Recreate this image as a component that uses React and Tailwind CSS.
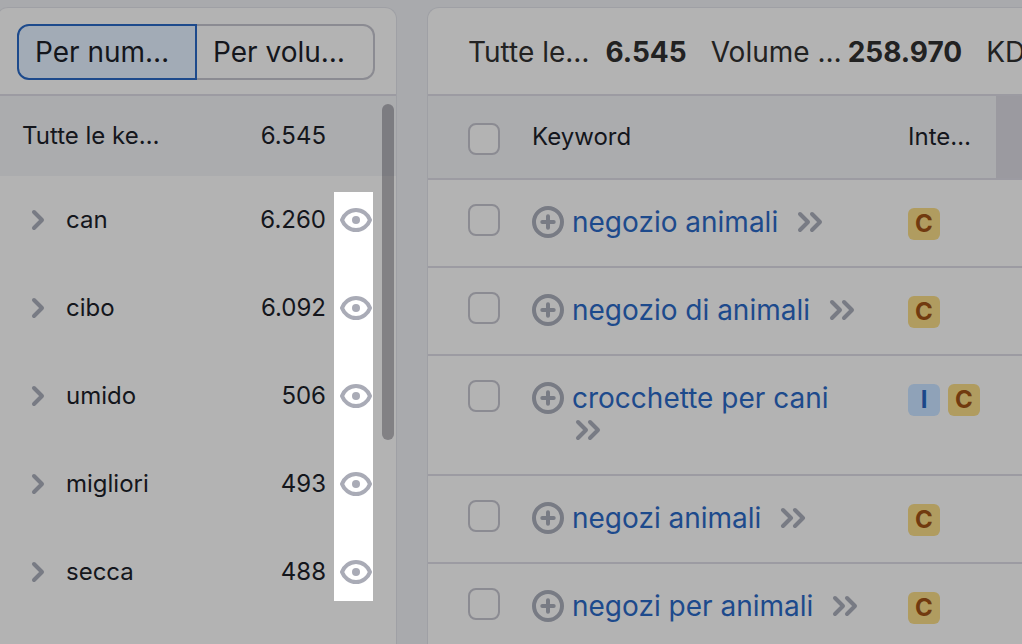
const groups = [
  { name: "can", count: "6.260" },
  { name: "cibo", count: "6.092" },
  { name: "umido", count: "506" },
  { name: "migliori", count: "493" },
  { name: "secca", count: "488" },
];

const keywords = [
  { text: "negozio animali", intents: ["C"] },
  { text: "negozio di animali", intents: ["C"] },
  { text: "crocchette per cani", intents: ["I", "C"] },
  { text: "negozi animali", intents: ["C"] },
  { text: "negozi per animali", intents: ["C"] },
];

const intentStyles = {
  C: "bg-[#b09c60] text-[#713a0f]",
  I: "bg-[#8fa2b8] text-[#1b4789]",
};

function ChevronIcon() {
  return (
    <svg className="size-8 shrink-0" viewBox="0 0 32 32" fill="none" stroke="#787b84" strokeWidth="4" strokeLinecap="round" strokeLinejoin="round">
      <path d="M12 8l8 8-8 8" />
    </svg>
  );
}

function DoubleChevronIcon() {
  return (
    <svg className="size-8" viewBox="0 0 32 32" fill="none" stroke="#787b84" strokeWidth="4" strokeLinecap="round" strokeLinejoin="round">
      <path d="M6 8l8 8-8 8M18 8l8 8-8 8" />
    </svg>
  );
}

function PlusIcon() {
  return (
    <svg className="size-8" viewBox="0 0 32 32" fill="none" stroke="#787b84" strokeWidth="4" strokeLinecap="round">
      <circle cx="16" cy="16" r="14" />
      <path d="M16 10.3v11.4M10.3 16h11.4" />
    </svg>
  );
}

function EyeIcon() {
  return (
    <svg className="size-8" viewBox="0 0 32 32" fill="none">
      <path
        d="M2 16C4 10.500 9.500 6 16 6s12 4.500 14 10c-2 5.500-7.500 10-14 10S4 21.500 2 16z"
        stroke="#a9abb6"
        strokeWidth="4"
        strokeLinejoin="round"
      />
      <circle cx="16" cy="16" r="4" fill="#a9abb6" />
    </svg>
  );
}

function Checkbox({ label }) {
  return (
    <input
      type="checkbox"
      aria-label={label}
      className="block size-8 appearance-none rounded-lg border-2 border-[#8b8b92] bg-[#b3b3b3]"
    />
  );
}

function GroupsPanel() {
  return (
    <aside className="-ml-1 w-[401px] shrink-0 rounded-t-xl border border-b-0 border-[#9fa0a5] bg-[#b3b3b3]">
      <div className="flex border-b-2 border-[#9c9ba2] pt-4 pr-[21px] pb-3.5 pl-5 text-[28px] leading-8">
        <button className="h-14 flex-1 rounded-l-xl border-2 border-[#1d4a8c] bg-[#a2abb6] pl-4 text-left">Per num…</button>
        <button className="h-14 flex-1 rounded-r-xl border-2 border-l-0 border-[#8b8b92] pl-4 text-left">Per volu…</button>
      </div>
      <div className="relative text-2xl">
        <div className="flex h-20 items-center justify-between bg-[#abacae] pl-[25px] pr-[70px]">
          <span>Tutte le ke…</span>
          <span>6.545</span>
        </div>
        <div className="flex items-start">
          <ul className="flex-1">
            {groups.map((g) => (
              <li key={g.name} className="flex h-22 items-center pl-[25px] pr-2">
                <button aria-label={`Espandi ${g.name}`}>
                  <ChevronIcon />
                </button>
                <span className="ml-3 flex-1">{g.name}</span>
                <span>{g.count}</span>
              </li>
            ))}
          </ul>
          <div className="mt-4 mr-[23px] flex flex-col gap-14 bg-white pt-3 pr-px pb-[13px] pl-1.5">
            {groups.map((g) => (
              <button key={g.name} aria-label={`Nascondi ${g.name}`}>
                <EyeIcon />
              </button>
            ))}
          </div>
        </div>
        <div className="absolute top-2 right-0.5 h-84 w-3 rounded-full bg-[#05000a]/28" />
      </div>
    </aside>
  );
}

function KeywordRow({ keyword }) {
  return (
    <tr className="border-b-2 border-[#9c9ba2] align-top">
      <td className="pt-6 pl-10">
        <Checkbox label={keyword.text} />
      </td>
      <td className="pt-[26px] pr-9 pb-7">
        <div className="flex items-start gap-2">
          <button aria-label={`Aggiungi ${keyword.text}`}>
            <PlusIcon />
          </button>
          <div className="flex flex-1 flex-wrap gap-x-4">
            <a href="#" className="text-[28px] leading-8 text-[#1d4a8c]">{keyword.text}</a>
            <a href="#" aria-label={`Apri ${keyword.text}`}>
              <DoubleChevronIcon />
            </a>
          </div>
        </div>
      </td>
      <td className="pt-7">
        <div className="flex gap-2">
          {keyword.intents.map((i) => (
            <span key={i} className={`flex size-8 items-center justify-center rounded-md text-2xl font-bold ${intentStyles[i]}`}>
              {i}
            </span>
          ))}
        </div>
      </td>
      <td />
    </tr>
  );
}

function KeywordsPanel() {
  return (
    <main className="min-w-0 flex-1 overflow-hidden rounded-tl-xl border-t border-l border-[#9fa0a5] bg-[#b3b3b3]">
      <div className="flex h-22 items-center border-b-2 border-[#9c9ba2] pt-px pl-10 text-[28px] whitespace-nowrap text-[#222222]">
        <span>Tutte le…</span>
        <b className="ml-4">6.545</b>
        <span className="ml-6">Volume …</span>
        <b className="ml-1.5">258.970</b>
        <span className="ml-6">KD</span>
      </div>
      <table className="w-full table-fixed border-collapse">
        <colgroup>
          <col className="w-26" />
          <col className="w-94" />
          <col className="w-22" />
          <col />
        </colgroup>
        <thead>
          <tr className="h-[83px] border-b-2 border-[#9c9ba2] bg-[#abacae] text-left text-2xl">
            <th className="pt-1 pl-10">
              <Checkbox label="Seleziona tutte" />
            </th>
            <th className="font-normal">Keyword</th>
            <th className="font-normal">Inte…</th>
            <th className="bg-[#9b9aa0]" />
          </tr>
        </thead>
        <tbody>
          {keywords.map((k) => (
            <KeywordRow key={k.text} keyword={k} />
          ))}
        </tbody>
      </table>
    </main>
  );
}

export default function App() {
  return (
    <div className="flex h-screen gap-[30px] overflow-hidden bg-[#a9aaad] pt-[7px] font-['Inter',sans-serif] text-[#14161c]">
      <GroupsPanel />
      <KeywordsPanel />
    </div>
  );
}
